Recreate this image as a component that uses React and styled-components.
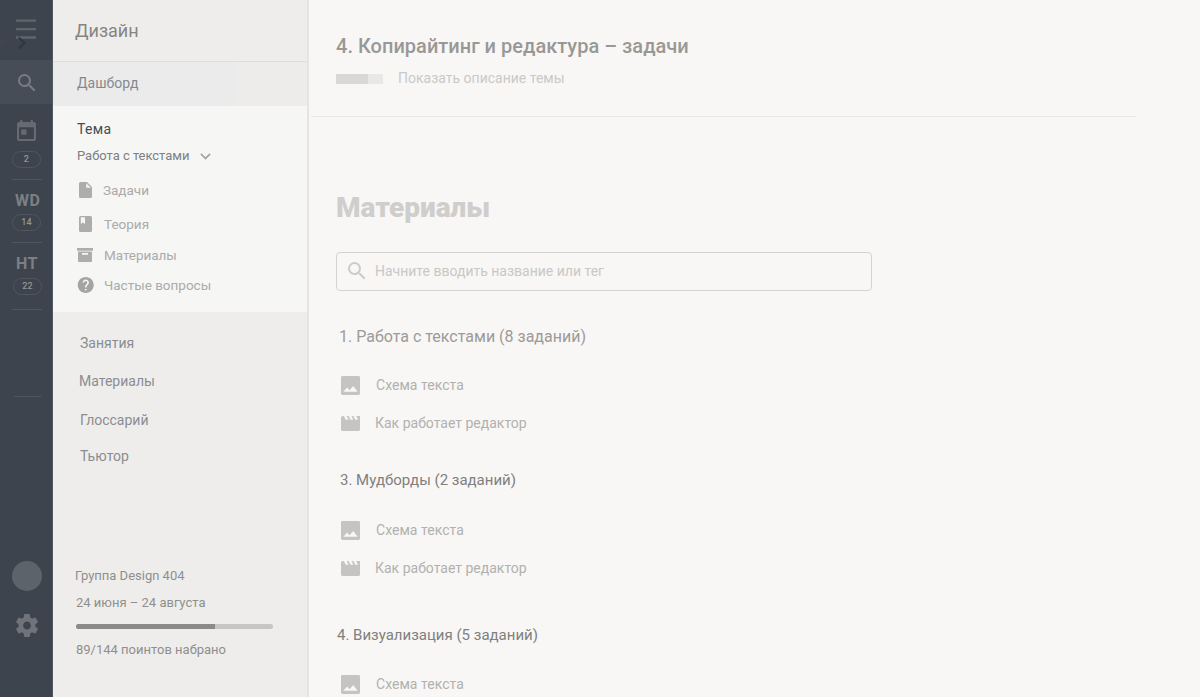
import React from "react";
import styled, { createGlobalStyle } from "styled-components";

const GlobalStyle = createGlobalStyle`
  *, *::before, *::after { box-sizing: border-box; }
  body { margin: 0; font-family: Roboto, "Open Sans", sans-serif; background: #f8f7f5; overflow: hidden; }
  svg { display: block; flex: none; }
`;

const Page = styled.div`
  display: flex;
  width: 1200px;
  height: 697px;
  overflow: hidden;
`;

/* Rail */
const Rail = styled.aside`
  width: 53px;
  flex: none;
  display: flex;
  flex-direction: column;
  background: #3e444d;
  border-right: 1px solid #535961;
`;

const RailTop = styled.div`
  height: 60px;
  position: relative;
  padding: 19px 0 0 16px;
`;

const Peek = styled.svg`
  position: absolute;
  left: 0;
  top: 36px;
`;

const RailSearch = styled.div`
  height: 44px;
  padding: 14px 0 0 18px;
  background: #474d56;
`;

const RailIcon = styled.div`
  margin: ${(p) => p.$top}px 0 0 ${(p) => p.$left}px;
`;

const RailCode = styled.div`
  margin-top: ${(p) => p.$top}px;
  padding-left: ${(p) => p.$left}px;
  height: 20px;
  font-size: 16px;
  line-height: 20px;
  font-weight: 700;
  letter-spacing: 0.4px;
  color: #7c7f84;
`;

const Count = styled.div`
  width: 29px;
  height: 17px;
  margin: ${(p) => p.$top}px 0 0 ${(p) => p.$left || 12}px;
  border: 1px solid #50565f;
  border-radius: 9px;
  display: flex;
  align-items: center;
  justify-content: center;
  font-size: 9px;
  line-height: 15px;
  font-weight: 500;
  letter-spacing: 0.2px;
  color: #92959a;
`;

const RailRule = styled.div`
  height: 1px;
  width: ${(p) => p.$width || 30}px;
  margin: ${(p) => p.$top}px 0 0 ${(p) => p.$left || 12}px;
  background: #50565f;
`;

const Avatar = styled.div`
  width: 30px;
  height: 30px;
  margin: 164px 0 0 12px;
  border-radius: 50%;
  background: #5d636b;
`;

/* Course sidebar */
const Sidebar = styled.nav`
  width: 256px;
  flex: none;
  display: flex;
  flex-direction: column;
  background: #eeedeb;
  border-right: 2px solid #e5e4e3;
`;

const CourseName = styled.div`
  height: 62px;
  padding: 21px 0 0 22px;
  border-bottom: 1px solid #dedddc;
  font-size: 18px;
  line-height: 20px;
  color: #868584;
`;

const Dashboard = styled.div`
  height: 44px;
  padding: 11px 0 0 24px;
  background: linear-gradient(90deg, #ebebeb 183px, #eeecea 183px);
  font-size: 14px;
  line-height: 20px;
  color: #85898e;
`;

const Topic = styled.section`
  height: 206px;
  padding-top: 13px;
  background: #f6f6f4;
`;

const TopicTitle = styled.div`
  padding-left: 24px;
  font-size: 14px;
  line-height: 20px;
  letter-spacing: 0.3px;
  color: #474c54;
`;

const TopicSelect = styled.div`
  display: flex;
  align-items: center;
  gap: 11px;
  margin-top: 7px;
  height: 20px;
  padding-left: 24px;
  font-size: 13px;
  line-height: 20px;
  color: #7c8085;
`;

const TopicLink = styled.div`
  display: flex;
  align-items: center;
  height: 20px;
  margin-top: ${(p) => p.$top}px;
  padding-left: 24px;
  font-size: 13.5px;
  line-height: 20px;
  color: #aaabac;
`;

const LinkIcon = styled.span`
  width: ${(p) => p.$width || 27}px;
  flex: none;
`;

const Label = styled.span`
  letter-spacing: ${(p) => p.$ls || 0}px;
  margin-top: ${(p) => p.$shift || 0}px;
  white-space: nowrap;
`;

const SectionLink = styled.div`
  height: 20px;
  margin-top: ${(p) => p.$top}px;
  padding-left: ${(p) => p.$left || 27}px;
  font-size: 14px;
  line-height: 20px;
  color: #8a8d91;
`;

const GroupLine = styled.div`
  height: 20px;
  margin-top: ${(p) => p.$top}px;
  padding-left: ${(p) => p.$left || 23}px;
  font-size: 13px;
  line-height: 20px;
  color: #8f8f8e;
`;

const Points = styled.div`
  width: 197px;
  height: 5px;
  margin: 11px 0 0 23px;
  border-radius: 3px;
  overflow: hidden;
  background: #c6c6c5;
`;

const PointsFill = styled.div`
  width: 139px;
  height: 100%;
  background: #8a8a89;
`;

/* Main content */
const Main = styled.main`
  flex: 1;
  min-width: 0;
  background: #f8f7f5;
`;

const Header = styled.header`
  width: 825px;
  height: 117px;
  margin-left: 2px;
  padding: 36px 0 0 25px;
  border-bottom: 1px solid #eae9e7;
`;

const Title = styled.h1`
  margin: 0;
  font-size: 20px;
  line-height: 20px;
  font-weight: 500;
  letter-spacing: 0.02px;
  color: #999897;
`;

const Description = styled.div`
  display: flex;
  align-items: center;
  gap: 15px;
  height: 20px;
  margin-top: 13px;
  font-size: 14px;
  line-height: 20px;
  color: #cac9c8;
`;

const Progress = styled.div`
  width: 47px;
  height: 10px;
  background: linear-gradient(90deg, #d8d8d7 32px, #e9e8e7 32px);
`;

const Content = styled.div`
  padding-left: 27px;
`;

const Heading = styled.h2`
  margin: 76px 0 0;
  font-size: 28px;
  line-height: 30px;
  font-weight: 900;
  color: #cfcecc;
`;

const SearchField = styled.div`
  width: 536px;
  height: 39px;
  margin-top: 29px;
  padding: 0 0 1px 11px;
  display: flex;
  align-items: center;
  gap: 9px;
  border: 1px solid #d4d3d2;
  border-radius: 4px;
  font-size: 14px;
  line-height: 20px;
  color: #c8c8c8;
`;

const GroupTitle = styled.h3`
  margin: ${(p) => p.$top}px 0 0 ${(p) => p.$left}px;
  font-weight: 400;
  font-size: ${(p) => p.$size || 15}px;
  line-height: 20px;
  color: ${(p) => p.$color || "#80807f"};
`;

const Material = styled.div`
  display: flex;
  align-items: center;
  height: 20px;
  margin-top: ${(p) => p.$top}px;
  padding-left: 5px;
  font-size: 14px;
  line-height: 20px;
  color: #b1b1b0;
`;

const MaterialIcon = styled.span`
  width: ${(p) => p.$width}px;
  flex: none;
  padding-top: ${(p) => p.$drop || 0}px;
`;

const SearchIcon = ({ color }) => (
  <svg width="18" height="18" viewBox="3 3 18 18" fill={color}>
    <path d="M15.5 14h-.79l-.28-.27A6.47 6.47 0 0 0 16 9.5 6.5 6.5 0 1 0 9.5 16c1.61 0 3.09-.59 4.23-1.57l.27.28v.79l5 4.99L20.49 19l-4.99-5zm-6 0C7.01 14 5 11.99 5 9.5S7.01 5 9.5 5 14 7.01 14 9.5 11.99 14 9.5 14z" />
  </svg>
);

const CalendarIcon = () => (
  <svg width="19" height="21" viewBox="3 1 18 20" preserveAspectRatio="none" fill="#666b73">
    <path d="M19 3h-1V1h-2v2H8V1H6v2H5c-1.11 0-1.99.9-1.99 2L3 19a2 2 0 0 0 2 2h14c1.1 0 2-.9 2-2V5c0-1.1-.9-2-2-2zm0 16H5V8h14v11zM7 10h5v5H7z" />
  </svg>
);

const GearIcon = () => (
  <svg width="22" height="23" viewBox="2.2 2 19.6 20" preserveAspectRatio="none" fill="#707379">
    <path d="M19.43 12.98c.04-.32.07-.64.07-.98s-.03-.66-.07-.98l2.11-1.65c.19-.15.24-.42.12-.64l-2-3.46c-.12-.22-.39-.3-.61-.22l-2.49 1c-.52-.4-1.08-.73-1.69-.98l-.38-2.65A.488.488 0 0 0 14 2h-4c-.25 0-.46.18-.49.42l-.38 2.65c-.61.25-1.17.59-1.69.98l-2.49-1c-.23-.09-.49 0-.61.22l-2 3.46c-.13.22-.07.49.12.64l2.11 1.65c-.04.32-.07.65-.07.98s.03.66.07.98l-2.11 1.65c-.19.15-.24.42-.12.64l2 3.46c.12.22.39.3.61.22l2.49-1c.52.4 1.08.73 1.69.98l.38 2.65c.03.24.24.42.49.42h4c.25 0 .46-.18.49-.42l.38-2.65c.61-.25 1.17-.59 1.69-.98l2.49 1c.23.09.49 0 .61-.22l2-3.46c.12-.22.07-.49-.12-.64l-2.11-1.65zM12 15.5c-1.93 0-3.5-1.57-3.5-3.5s1.57-3.5 3.5-3.5 3.5 1.57 3.5 3.5-1.57 3.5-3.5 3.5z" />
  </svg>
);

const FileIcon = () => (
  <svg width="17" height="16" viewBox="-2 0 17 16" fill="#adadad">
    <path fillRule="evenodd" d="M1.5 0A1.5 1.5 0 0 0 0 1.5v13A1.5 1.5 0 0 0 1.5 16h10a1.5 1.5 0 0 0 1.5-1.5V5L8 0zM7.2 1.2 11.8 5.8H7.2z" />
  </svg>
);

const BookIcon = () => (
  <svg width="17" height="16" viewBox="-2 0 17 16" fill="#adadad">
    <path fillRule="evenodd" d="M1.5 0h10A1.5 1.5 0 0 1 13 1.5v13a1.5 1.5 0 0 1-1.5 1.5h-10A1.5 1.5 0 0 1 0 14.5v-13A1.5 1.5 0 0 1 1.5 0zM1.8 1.3V8L3.9 6.6 6 8V1.3z" />
  </svg>
);

const ArchiveIcon = () => (
  <svg width="16" height="14" viewBox="0 0 16 14" fill="#adadad">
    <path d="M0 0h16v2.7H0z" />
    <path fillRule="evenodd" d="M1 3.6h14v9.4a1 1 0 0 1-1 1H2a1 1 0 0 1-1-1zM5 5.1v1.6h6V5.1z" />
  </svg>
);

const HelpIcon = () => (
  <svg width="17" height="16" viewBox="1.2 2 21 20" fill="#a4a4a4">
    <path d="M12 2C6.48 2 2 6.48 2 12s4.48 10 10 10 10-4.48 10-10S17.52 2 12 2zm1 17h-2v-2h2v2zm2.07-7.75-.9.92C13.45 12.9 13 13.5 13 15h-2v-.5c0-1.1.45-2.1 1.17-2.83l1.24-1.26c.37-.36.59-.86.59-1.41 0-1.1-.9-2-2-2s-2 .9-2 2H8c0-2.21 1.79-4 4-4s4 1.79 4 4c0 .88-.36 1.68-.93 2.25z" />
  </svg>
);

const ImageIcon = () => (
  <svg width="19" height="19" viewBox="3 3 18 18" fill="#c5c4c3">
    <path fillRule="evenodd" d="M4.4 3h15.2A1.4 1.4 0 0 1 21 4.4v15.2a1.4 1.4 0 0 1-1.4 1.4H4.4A1.4 1.4 0 0 1 3 19.6V4.4A1.4 1.4 0 0 1 4.4 3zM5.2 18h13.6l-4.2-5.6-3.5 4.2-2.3-2.7z" />
  </svg>
);

const MovieIcon = () => (
  <svg width="19" height="15" viewBox="2 4 20 16" preserveAspectRatio="none" fill="#c5c4c3">
    <path d="m18 4 2 4h-3l-2-4h-2l2 4h-3l-2-4H8l2 4H7L5 4H4c-1.1 0-1.99.9-1.99 2L2 18.5c0 .9.6 1.5 1.5 1.5h17c.9 0 1.5-.6 1.5-1.5V4h-4z" />
  </svg>
);

const ImageRow = ({ top }) => (
  <Material $top={top}>
    <MaterialIcon $width={35}><ImageIcon /></MaterialIcon>
    <Label $ls={0.03}>Схема текста</Label>
  </Material>
);

const MovieRow = ({ top }) => (
  <Material $top={top}>
    <MaterialIcon $width={34} $drop={1}><MovieIcon /></MaterialIcon>
    <Label>Как работает редактор</Label>
  </Material>
);

export default function App() {
  return (
    <>
      <GlobalStyle />
      <Page>
        <Rail>
          <RailTop>
            <svg width="20" height="21" fill="#5f656d">
              <path d="M0 .5h20v2.3H0zM0 9h20v2.3H0zM0 17.3h20v2.4H0z" />
            </svg>
            <Peek width="30" height="14" fill="none">
              <path d="M18.8 1.5 24.6 7l-5.8 5.5" stroke="#30363f" strokeWidth="2" />
              <path d="M0 4.5h3v5H0M0 7h3" stroke="#49464d" strokeWidth="1" />
            </Peek>
          </RailTop>
          <RailSearch><SearchIcon color="#777c83" /></RailSearch>
          <RailIcon $top={16} $left={17}><CalendarIcon /></RailIcon>
          <Count $top={10}>2</Count>
          <RailRule $top={11} />
          <RailCode $top={11} $left={15}>WD</RailCode>
          <Count $top={3}>14</Count>
          <RailRule $top={11} />
          <RailCode $top={11} $left={16}>HT</RailCode>
          <Count $top={4} $left={13}>22</Count>
          <RailRule $top={14} />
          <RailRule $top={86} $left={14} $width={27} />
          <Avatar />
          <RailIcon $top={23} $left={16}><GearIcon /></RailIcon>
        </Rail>

        <Sidebar>
          <CourseName>Дизайн</CourseName>
          <Dashboard>Дашборд</Dashboard>
          <Topic>
            <TopicTitle>Тема</TopicTitle>
            <TopicSelect>
              <Label $ls={-0.03}>Работа с текстами</Label>
              <svg width="11" height="7" fill="none" stroke="#a5a7aa" strokeWidth="1.8">
                <path d="M.9.9 5.5 5.5 10.1.9" />
              </svg>
            </TopicSelect>
            <TopicLink $top={14}><LinkIcon $width={26}><FileIcon /></LinkIcon><Label>Задачи</Label></TopicLink>
            <TopicLink $top={14}><LinkIcon><BookIcon /></LinkIcon><Label>Теория</Label></TopicLink>
            <TopicLink $top={11}><LinkIcon><ArchiveIcon /></LinkIcon><Label $ls={-0.05}>Материалы</Label></TopicLink>
            <TopicLink $top={10}><LinkIcon><HelpIcon /></LinkIcon><Label>Частые вопросы</Label></TopicLink>
          </Topic>
          <SectionLink $top={21}>Занятия</SectionLink>
          <SectionLink $top={18} $left={26}>Материалы</SectionLink>
          <SectionLink $top={19}>Глоссарий</SectionLink>
          <SectionLink $top={16}>Тьютор</SectionLink>
          <GroupLine $top={100} $left={22}>Группа Design 404</GroupLine>
          <GroupLine $top={7}>24 июня – 24 августа</GroupLine>
          <Points><PointsFill /></Points>
          <GroupLine $top={11}>89/144 поинтов набрано</GroupLine>
        </Sidebar>

        <Main>
          <Header>
            <Title>4. Копирайтинг и редактура – задачи</Title>
            <Description><Progress /><Label $shift={-2}>Показать описание темы</Label></Description>
          </Header>
          <Content>
            <Heading>Материалы</Heading>
            <SearchField>
              <SearchIcon color="#c9cbcd" />
              <Label>Начните вводить название или тег</Label>
            </SearchField>
            <GroupTitle $top={36} $left={3} $size={16} $color="#9c9b9a">1. Работа с текстами (8 заданий)</GroupTitle>
            <ImageRow top={28} />
            <MovieRow top={18} />
            <GroupTitle $top={37} $left={4}>3. Мудборды (2 заданий)</GroupTitle>
            <ImageRow top={30} />
            <MovieRow top={18} />
            <GroupTitle $top={47} $left={1}>4. Визуализация (5 заданий)</GroupTitle>
            <ImageRow top={29} />
          </Content>
        </Main>
      </Page>
    </>
  );
}
